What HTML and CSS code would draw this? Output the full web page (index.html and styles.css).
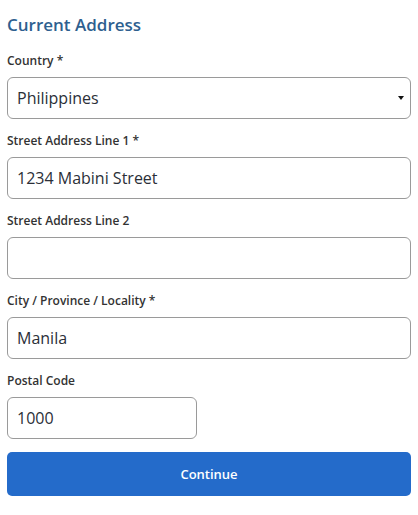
FILE: index.html
```html
<!DOCTYPE html>
<html lang="en">
<head>
<meta charset="utf-8">
<title>Current Address</title>
<link rel="stylesheet" href="styles.css">
</head>
<body>
<form class="address-form">
  <h2 class="form-title">Current Address</h2>
  <div class="field">
    <label class="field-label" for="country">Country *</label>
    <div class="select-wrap">
      <select id="country" class="control">
        <option>Philippines</option>
      </select>
    </div>
  </div>
  <div class="field">
    <label class="field-label" for="street1">Street Address Line 1 *</label>
    <input id="street1" class="control" type="text" value="1234 Mabini Street">
  </div>
  <div class="field">
    <label class="field-label" for="street2">Street Address Line 2</label>
    <input id="street2" class="control" type="text" value="">
  </div>
  <div class="field">
    <label class="field-label" for="city">City / Province / Locality *</label>
    <input id="city" class="control" type="text" value="Manila">
  </div>
  <div class="field">
    <label class="field-label" for="postal">Postal Code</label>
    <input id="postal" class="control control-short" type="text" value="1000">
  </div>
  <button type="button" class="btn-continue">Continue</button>
</form>
</body>
</html>
```

FILE: styles.css
```css
html, body {
  margin: 0;
  padding: 0;
  background: #ffffff;
}

body {
  font-family: "Open Sans", "Noto Sans", sans-serif;
  color: #333333;
}

.address-form {
  display: flex;
  flex-direction: column;
  padding: 13px 7px 0 7px;
}

.form-title {
  margin: 0 0 16px 0;
  font-size: 17px;
  line-height: 24px;
  font-weight: 600;
  color: #2e5f8f;
}

.field {
  display: flex;
  flex-direction: column;
  margin-bottom: 14px;
}

.field-label {
  font-size: 12px;
  line-height: 16px;
  font-weight: 600;
  color: #333333;
  margin-bottom: 8px;
}

.select-wrap {
  position: relative;
}

.select-wrap::after {
  content: "";
  position: absolute;
  right: 7px;
  top: 19px;
  width: 0;
  height: 0;
  border-left: 3px solid transparent;
  border-right: 3px solid transparent;
  border-top: 4px solid #111111;
  pointer-events: none;
}

.control {
  box-sizing: border-box;
  width: 100%;
  height: 42px;
  margin: 0;
  padding: 0 9px;
  border: 1px solid #9a9a9a;
  border-radius: 6px;
  background: #ffffff;
  font-family: "Open Sans", "Noto Sans", sans-serif;
  font-size: 16px;
  color: #2b2f38;
  outline: none;
  -webkit-appearance: none;
  appearance: none;
}

.control-short {
  width: 190px;
}

.btn-continue {
  box-sizing: border-box;
  width: 100%;
  height: 44px;
  margin-top: -1px;
  border: none;
  border-radius: 5px;
  background: #246bca;
  color: #ffffff;
  font-family: "Open Sans", "Noto Sans", sans-serif;
  font-size: 13px;
  font-weight: 600;
  cursor: pointer;
}
```
